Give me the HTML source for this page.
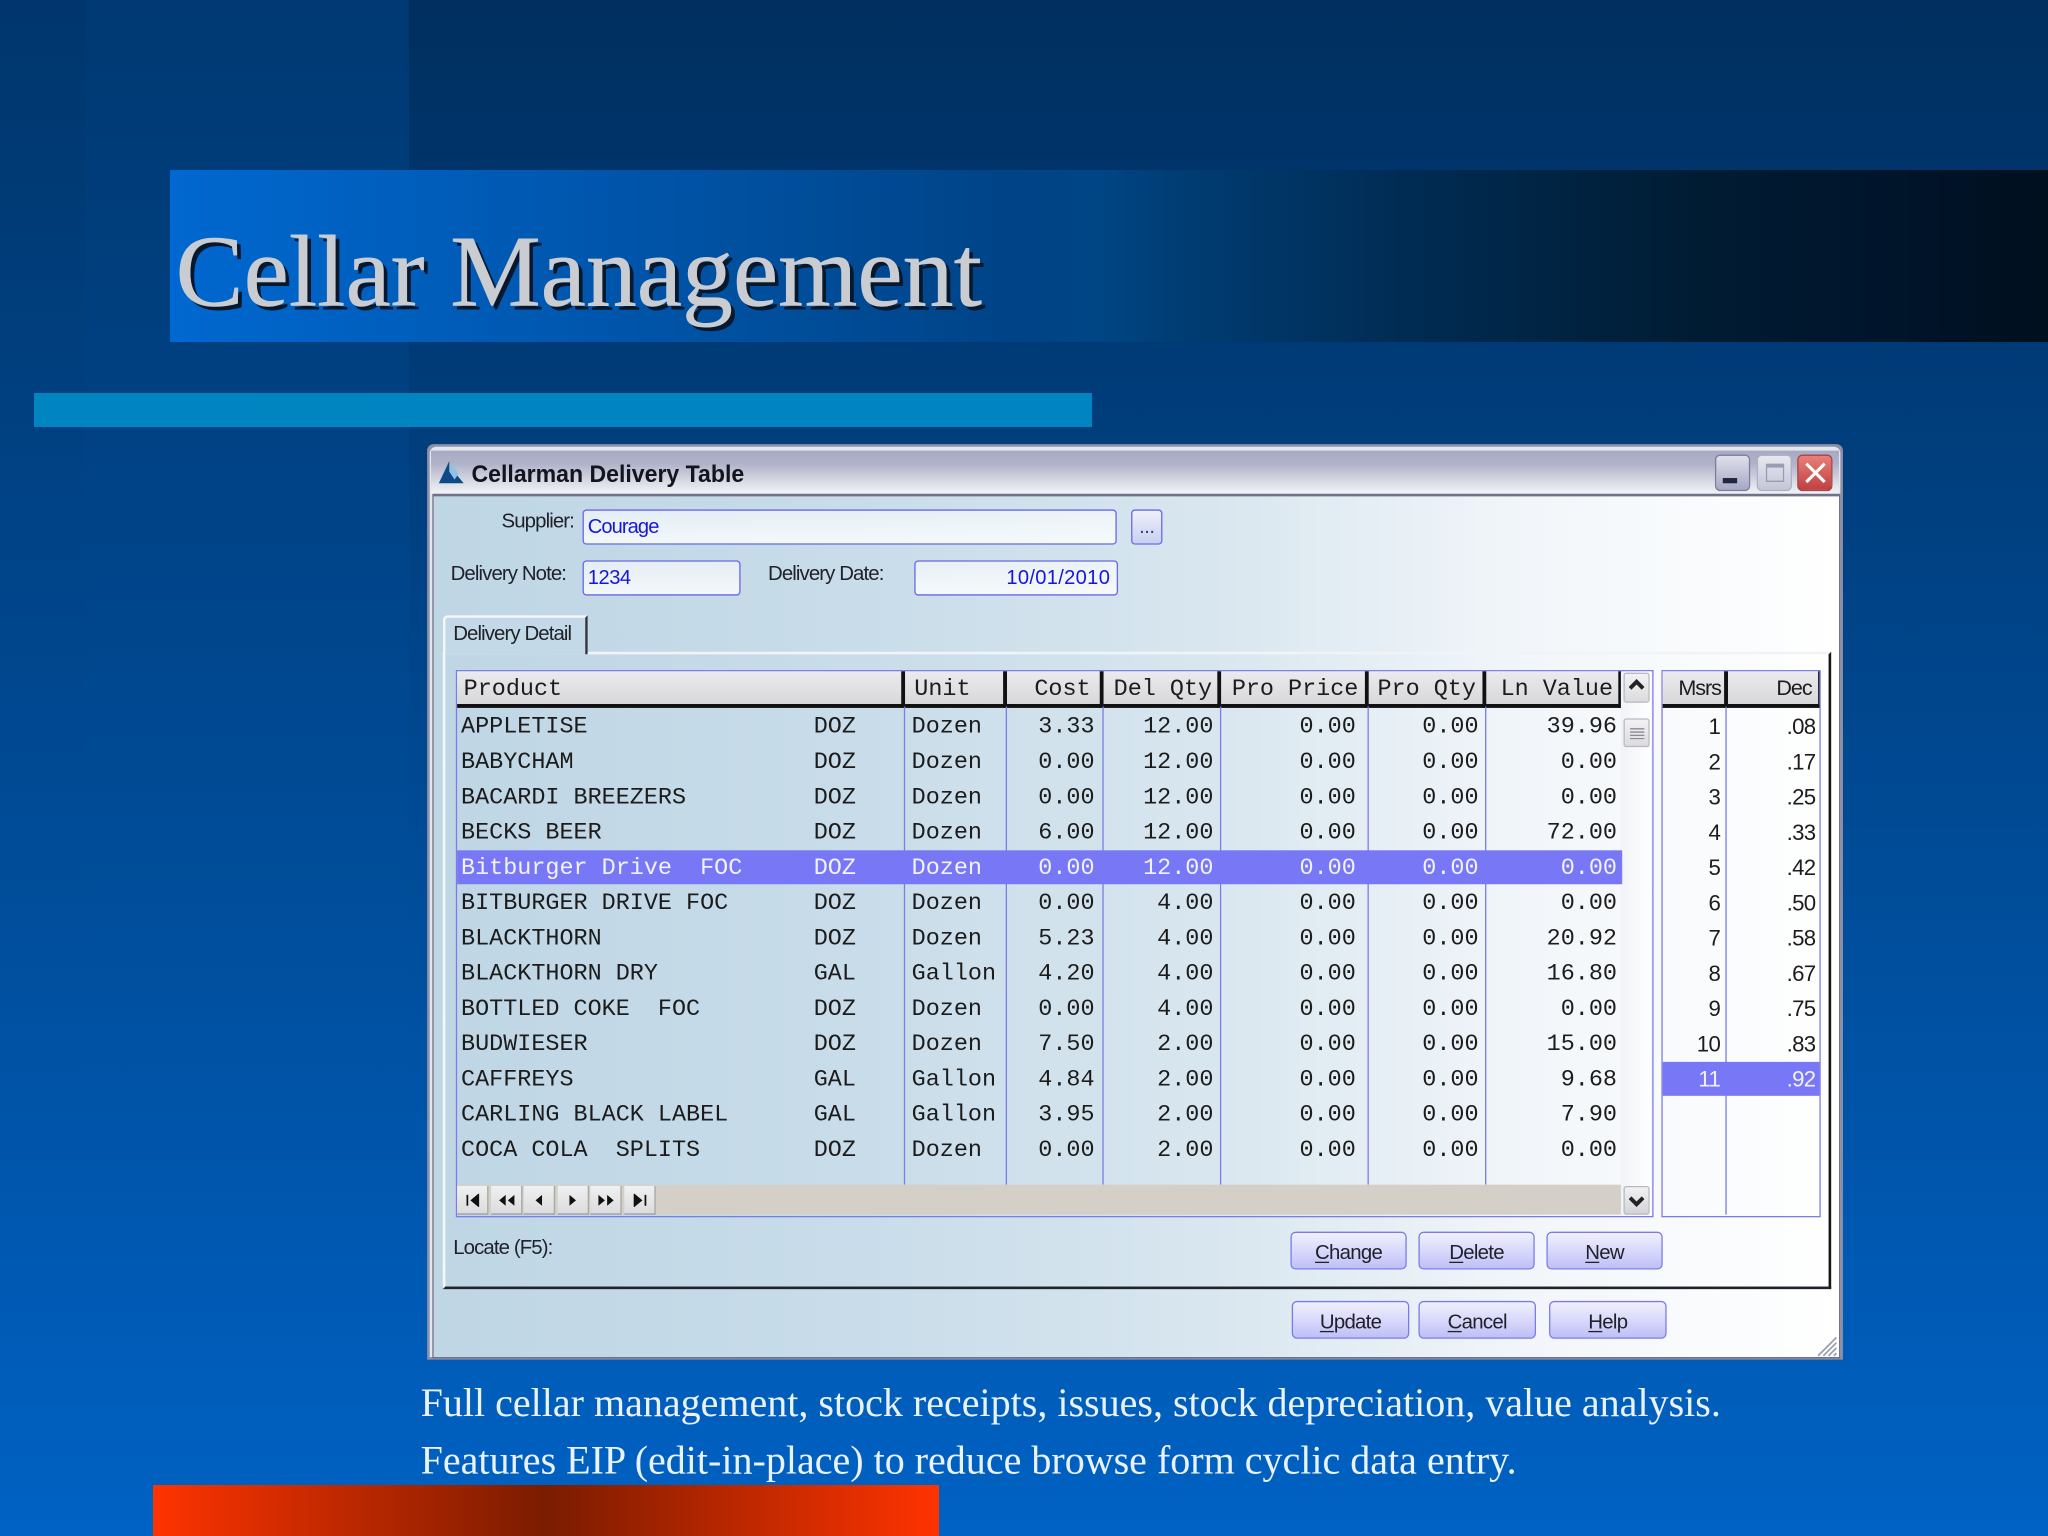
<!DOCTYPE html>
<html><head><meta charset="utf-8"><title>Cellar Management</title>
<style>
html,body{margin:0;padding:0;width:2048px;height:1536px;overflow:hidden;background:#00407f}
#bg{position:absolute;left:0;top:0;width:2048px;height:1536px;background:linear-gradient(180deg,#002f5f 0%,#0062c4 100%)}
#l1{position:absolute;left:85px;top:0;width:324px;height:1100px;background:linear-gradient(180deg,rgba(0,90,180,.24),rgba(0,90,180,.12) 50%,rgba(0,98,196,0))}
#l0{position:absolute;left:0;top:0;width:85px;height:1100px;background:linear-gradient(180deg,rgba(0,90,180,.16),rgba(0,90,180,.1) 50%,rgba(0,98,196,0))}
#tb{position:absolute;left:170px;top:170px;width:1878px;height:172px;background:linear-gradient(90deg,#0068d0 0,#0056ac 430px,#004488 830px,#004584 930px,#003c72 1020px,#002c54 1230px,#001c33 1530px,#00142a 1730px,#000f1e 1878px)}
#bar{position:absolute;left:34px;top:393px;width:1058px;height:34px;background:#0085c1}
#red{position:absolute;left:153px;top:1485px;width:786px;height:51px;background:linear-gradient(90deg,#ff3300 0,#7a1c00 50%,#ff3300 100%)}
#s{position:absolute;left:0;top:0;width:1568px;height:1176px;transform:scale(1.306122);transform-origin:0 0}
#s div,#s span,#s svg{position:absolute}
#h1{left:134.5px;top:163px;font:78px/90px "Liberation Serif",serif;color:#c9cdd2;text-shadow:3px 3px 0 #06182e;white-space:nowrap;-webkit-text-stroke:.35px #c9cdd2}
.p{left:322px;font:30.65px/40px "Liberation Serif",serif;color:#eaf2ff;white-space:nowrap}
#w{left:327px;top:340px;width:1084px;height:701px;background:#8e90a8;border-radius:5px 5px 0 0}
#w2{left:329px;top:342px;width:1080px;height:697px;background:#e4e6ee;border-radius:5px 5px 0 0}
#t{left:330px;top:345px;width:1078px;height:33px;background:linear-gradient(180deg,#a8aac4 0,#b0b2c8 30%,#e0e2ea 80%,#f2f3f7 100%)}
#tl{left:361px;top:351px;font:bold 18.6px/24px "Liberation Sans",sans-serif;color:#14141e;white-space:nowrap;transform:scaleX(.95);transform-origin:0 0}
#b{left:331px;top:378px;width:1076px;height:659px;background:linear-gradient(90deg,#bfd6e5 0,#c8dce9 30%,#d8e6ef 55%,#f2f6fa 78%,#fff 100%);border:1px solid #70728a;border-top:2px solid #70728a}
.wb{border-radius:4px;top:348px;width:27px;height:28px}
.lb{font:15.6px/20px "Liberation Sans",sans-serif;color:#20222a;white-space:nowrap;letter-spacing:-.68px}
.f{background:linear-gradient(180deg,rgba(255,255,255,.55),rgba(255,255,255,.8));border:1px solid #6a6ae6;border-radius:3px;box-sizing:border-box;color:#1616e0;font:15.4px/26px "Liberation Sans",sans-serif;letter-spacing:-.35px;white-space:nowrap}
#pl{left:339px;top:499px;width:1063px;height:488px;box-sizing:border-box;border-left:2px solid #f4f6f8;border-top:2px solid #f0f4f7;border-right:2px solid #16181c;border-bottom:2px solid #20242a}
#tab{left:339px;top:471px;width:111px;height:30px;box-sizing:border-box;border-left:2px solid #f4f6f8;border-top:2px solid #f4f6f8;border-right:2px solid #34363c;border-radius:4px 0 0 0;background:#c4d9e7}
#g{left:349px;top:513px;width:915px;height:417px;border:1px solid #7c7ce6}
#g2{left:1272px;top:513px;width:120px;height:417px;border:1px solid #7c7ce6}
.hc{top:514px;box-sizing:border-box;background:linear-gradient(180deg,#ebebed,#d8d8da);border-right:3px solid #111;border-bottom:3px solid #111;height:28px}
.ht{top:515px;font:17.95px/26px "Liberation Mono",monospace;color:#1c1c1c;white-space:pre}
.hs{top:515px;font:16.5px/24px "Liberation Sans",sans-serif;color:#1c1c1c;letter-spacing:-.8px;white-space:pre}
.vl{top:541px;width:1.4px;height:366px;background:#7c7ce6}
.r{left:0;width:1568px;height:27px;font:17.95px/29px "Liberation Mono",monospace;color:#1c1c1c;white-space:pre}
.r span{top:0}
.c1{left:353px}.c2{left:623px}.c3{left:698px}.c4{right:730px}.c5{right:639px}.c6{right:530px}.c7{right:436px}.c8{right:330px}
.m{right:251px;font:17px/27px "Liberation Sans",sans-serif;letter-spacing:-.5px}.d{right:178px;font:17px/27px "Liberation Sans",sans-serif;letter-spacing:-.5px}
.sel{color:#f2f2ff}
.btn{height:29px;width:89px;box-sizing:border-box;border:1px solid #7a7ae8;border-radius:4px;background:linear-gradient(180deg,#f0f0fe 0,#d4d4fb 60%,#bfbff6 100%);text-align:center;font:15.6px/31px "Liberation Sans",sans-serif;letter-spacing:-.55px;color:#20222a}
.btn u{text-underline-offset:2px}
.nb{top:908px;width:24px;height:22px;box-sizing:border-box;background:linear-gradient(180deg,#f0f0f0,#dcdcdc);border-right:1px solid #a8a8a8;border-bottom:1px solid #9a9ab0}
</style></head><body>
<div id="bg"></div><div id="l0"></div><div id="l1"></div><div id="tb"></div><div id="bar"></div><div id="red"></div>
<div id="s">
<div id="h1">Cellar Management</div>
<div class="p" style="top:1054px">Full cellar management, stock receipts, issues, stock depreciation, value analysis.</div>
<div class="p" style="top:1098px">Features EIP (edit-in-place) to reduce browse form cyclic data entry.</div>

<div id="w"></div><div id="w2"></div><div id="t"></div>
<svg style="left:335px;top:352px" width="22" height="20" viewBox="0 0 22 20"><path d="M9 1 L1 18 L20 18 L15 12 L13 15 L9 9 Z" fill="#0d4a86"/><path d="M11 3 L16 11 L13 15 L9 8 Z" fill="#8fc0e6"/></svg>
<div id="tl">Cellarman Delivery Table</div>
<div class="wb" style="left:1313px;background:linear-gradient(180deg,#e0e0ec,#a6a8c6);border:1px solid #7c7e9c;box-sizing:border-box"><div style="left:5px;top:17px;width:11px;height:4px;background:#23273a"></div></div>
<div class="wb" style="left:1345px;background:linear-gradient(180deg,#e8e8f0,#c4c6d8);border:1px solid #aeb0c4;box-sizing:border-box"><div style="left:6px;top:6px;width:14px;height:14px;border:1.5px solid #9a9cb4;border-top-width:3px;box-sizing:border-box"></div></div>
<div class="wb" style="left:1376px;background:linear-gradient(180deg,#e88078,#c04040);border:1px solid #a84048;box-sizing:border-box"><svg style="left:4px;top:4px" width="18" height="18" viewBox="0 0 18 18"><path d="M2 2 L16 16 M16 2 L2 16" stroke="#fff" stroke-width="2.4" fill="none"/></svg></div>

<div id="b"></div>

<div class="lb" style="left:384px;top:390px">Supplier:</div>
<div class="f" style="left:446px;top:390px;width:409px;height:27px;padding-left:3px;letter-spacing:-.7px">Courage</div>
<div class="f" style="left:866px;top:390px;width:24px;height:27px;text-align:center;color:#3a3a90;background:linear-gradient(180deg,#eef0fa,#c8d0ee)">...</div>
<div class="lb" style="left:345px;top:430px">Delivery Note:</div>
<div class="f" style="left:446px;top:429px;width:121px;height:27px;padding-left:3px">1234</div>
<div class="lb" style="left:588px;top:430px">Delivery Date:</div>
<div class="f" style="left:700px;top:429px;width:156px;height:27px;text-align:right;padding-right:5px;letter-spacing:.25px">10/01/2010</div>

<div id="pl"></div><div id="tab"></div>
<div class="lb" style="left:347px;top:476px">Delivery Detail</div>

<div id="g"></div><div id="g2"></div>
<div class="hc" style="left:350px;width:343px"></div>
<div class="hc" style="left:693px;width:78px"></div>
<div class="hc" style="left:771px;width:74px"></div>
<div class="hc" style="left:845px;width:90px"></div>
<div class="hc" style="left:935px;width:113px"></div>
<div class="hc" style="left:1048px;width:90px"></div>
<div class="hc" style="left:1138px;width:104px"></div>
<div class="hc" style="left:1273px;width:50px"></div>
<div class="hc" style="left:1323px;width:70px;border-right-width:1px"></div>
<span class="ht" style="left:355px">Product</span>
<span class="ht" style="left:700px">Unit</span>
<span class="ht" style="right:733px">Cost</span>
<span class="ht" style="right:640px">Del Qty</span>
<span class="ht" style="right:528px">Pro Price</span>
<span class="ht" style="right:438px">Pro Qty</span>
<span class="ht" style="right:333px">Ln Value</span>
<span class="hs" style="left:1285px">Msrs</span>
<span class="hs" style="right:181px">Dec</span>

<div class="vl" style="left:692px"></div><div class="vl" style="left:770px"></div><div class="vl" style="left:843.5px"></div><div class="vl" style="left:933.5px"></div><div class="vl" style="left:1047px"></div><div class="vl" style="left:1136.5px"></div>
<div class="vl" style="left:1321px;height:389px"></div>

<div style="left:1241px;top:514px;width:23px;height:416px;background:linear-gradient(90deg,#f0f3f7,#fff)"></div>
<div style="left:1243px;top:515px;width:20px;height:23px;box-sizing:border-box;border:1px solid #b8b8c4;border-radius:2px;background:linear-gradient(180deg,#f2f2f4,#dcdcde)"><svg style="left:3px;top:3px" width="12" height="10" viewBox="0 0 12 10"><path d="M1 8 L6 3 L11 8" stroke="#222" stroke-width="3" fill="none"/></svg></div>
<div style="left:1243px;top:550px;width:20px;height:22px;box-sizing:border-box;border:1px solid #b8b8c4;border-radius:2px;background:linear-gradient(180deg,#f2f2f4,#dcdcde)"><svg style="left:4px;top:6px" width="11" height="9" viewBox="0 0 11 9"><path d="M0 1H11M0 3.5H11M0 6H11M0 8.5H11" stroke="#8a8a94" stroke-width="1"/></svg></div>

<div style="left:350px;top:651px;width:892px;height:26px;background:#7878f6"></div>
<div style="left:1273px;top:813px;width:120px;height:26px;background:#7878f6"></div>

<div class="r" style="top:543px"><span class="c1">APPLETISE</span><span class="c2">DOZ</span><span class="c3">Dozen</span><span class="c4">3.33</span><span class="c5">12.00</span><span class="c6">0.00</span><span class="c7">0.00</span><span class="c8">39.96</span><span class="m">1</span><span class="d">.08</span></div>
<div class="r" style="top:570px"><span class="c1">BABYCHAM</span><span class="c2">DOZ</span><span class="c3">Dozen</span><span class="c4">0.00</span><span class="c5">12.00</span><span class="c6">0.00</span><span class="c7">0.00</span><span class="c8">0.00</span><span class="m">2</span><span class="d">.17</span></div>
<div class="r" style="top:597px"><span class="c1">BACARDI BREEZERS</span><span class="c2">DOZ</span><span class="c3">Dozen</span><span class="c4">0.00</span><span class="c5">12.00</span><span class="c6">0.00</span><span class="c7">0.00</span><span class="c8">0.00</span><span class="m">3</span><span class="d">.25</span></div>
<div class="r" style="top:624px"><span class="c1">BECKS BEER</span><span class="c2">DOZ</span><span class="c3">Dozen</span><span class="c4">6.00</span><span class="c5">12.00</span><span class="c6">0.00</span><span class="c7">0.00</span><span class="c8">72.00</span><span class="m">4</span><span class="d">.33</span></div>
<div class="r sel" style="top:651px"><span class="c1">Bitburger Drive  FOC</span><span class="c2">DOZ</span><span class="c3">Dozen</span><span class="c4">0.00</span><span class="c5">12.00</span><span class="c6">0.00</span><span class="c7">0.00</span><span class="c8">0.00</span><span class="m" style="color:#1c1c1c">5</span><span class="d" style="color:#1c1c1c">.42</span></div>
<div class="r" style="top:678px"><span class="c1">BITBURGER DRIVE FOC</span><span class="c2">DOZ</span><span class="c3">Dozen</span><span class="c4">0.00</span><span class="c5">4.00</span><span class="c6">0.00</span><span class="c7">0.00</span><span class="c8">0.00</span><span class="m">6</span><span class="d">.50</span></div>
<div class="r" style="top:705px"><span class="c1">BLACKTHORN</span><span class="c2">DOZ</span><span class="c3">Dozen</span><span class="c4">5.23</span><span class="c5">4.00</span><span class="c6">0.00</span><span class="c7">0.00</span><span class="c8">20.92</span><span class="m">7</span><span class="d">.58</span></div>
<div class="r" style="top:732px"><span class="c1">BLACKTHORN DRY</span><span class="c2">GAL</span><span class="c3">Gallon</span><span class="c4">4.20</span><span class="c5">4.00</span><span class="c6">0.00</span><span class="c7">0.00</span><span class="c8">16.80</span><span class="m">8</span><span class="d">.67</span></div>
<div class="r" style="top:759px"><span class="c1">BOTTLED COKE  FOC</span><span class="c2">DOZ</span><span class="c3">Dozen</span><span class="c4">0.00</span><span class="c5">4.00</span><span class="c6">0.00</span><span class="c7">0.00</span><span class="c8">0.00</span><span class="m">9</span><span class="d">.75</span></div>
<div class="r" style="top:786px"><span class="c1">BUDWIESER</span><span class="c2">DOZ</span><span class="c3">Dozen</span><span class="c4">7.50</span><span class="c5">2.00</span><span class="c6">0.00</span><span class="c7">0.00</span><span class="c8">15.00</span><span class="m">10</span><span class="d">.83</span></div>
<div class="r" style="top:813px"><span class="c1">CAFFREYS</span><span class="c2">GAL</span><span class="c3">Gallon</span><span class="c4">4.84</span><span class="c5">2.00</span><span class="c6">0.00</span><span class="c7">0.00</span><span class="c8">9.68</span><span class="m sel">11</span><span class="d sel">.92</span></div>
<div class="r" style="top:840px"><span class="c1">CARLING BLACK LABEL</span><span class="c2">GAL</span><span class="c3">Gallon</span><span class="c4">3.95</span><span class="c5">2.00</span><span class="c6">0.00</span><span class="c7">0.00</span><span class="c8">7.90</span></div>
<div class="r" style="top:867px"><span class="c1">COCA COLA  SPLITS</span><span class="c2">DOZ</span><span class="c3">Dozen</span><span class="c4">0.00</span><span class="c5">2.00</span><span class="c6">0.00</span><span class="c7">0.00</span><span class="c8">0.00</span></div>

<div style="left:350px;top:907px;width:891px;height:23px;background:#d4d0c8"></div>
<div class="nb" style="left:350px"><svg style="left:5px;top:6px" width="14" height="10" viewBox="0 0 14 12"><path d="M2 1V11M12 1L6 6L12 11Z" stroke="#111" stroke-width="1.6" fill="#111"/></svg></div>
<div class="nb" style="left:375.5px"><svg style="left:5px;top:6px" width="14" height="10" viewBox="0 0 16 12"><path d="M7 1L1 6L7 11ZM15 1L9 6L15 11Z" fill="#111"/></svg></div>
<div class="nb" style="left:401px"><svg style="left:7px;top:6px" width="9" height="10" viewBox="0 0 10 12"><path d="M8 1L2 6L8 11Z" fill="#111"/></svg></div>
<div class="nb" style="left:426.5px"><svg style="left:7px;top:6px" width="9" height="10" viewBox="0 0 10 12"><path d="M2 1L8 6L2 11Z" fill="#111"/></svg></div>
<div class="nb" style="left:452px"><svg style="left:5px;top:6px" width="14" height="10" viewBox="0 0 16 12"><path d="M1 1L7 6L1 11ZM9 1L15 6L9 11Z" fill="#111"/></svg></div>
<div class="nb" style="left:477.5px"><svg style="left:5px;top:6px" width="14" height="10" viewBox="0 0 14 12"><path d="M2 1L8 6L2 11ZM12 1V11" stroke="#111" stroke-width="1.6" fill="#111"/></svg></div>
<div style="left:1243px;top:908px;width:20px;height:22px;box-sizing:border-box;border:1px solid #b8b8c4;border-radius:2px;background:linear-gradient(180deg,#f2f2f4,#d4d4d8)"><svg style="left:3px;top:6px" width="12" height="10" viewBox="0 0 12 10"><path d="M1 2 L6 7 L11 2" stroke="#222" stroke-width="3" fill="none"/></svg></div>

<div class="lb" style="left:347px;top:946px">Locate (F5):</div>
<div class="btn" style="left:988px;top:943px"><u>C</u>hange</div>
<div class="btn" style="left:1086px;top:943px"><u>D</u>elete</div>
<div class="btn" style="left:1184px;top:943px"><u>N</u>ew</div>
<div class="btn" style="left:989px;top:996px;width:90px"><u>U</u>pdate</div>
<div class="btn" style="left:1086px;top:996px;width:90px"><u>C</u>ancel</div>
<div class="btn" style="left:1186px;top:996px;width:90px"><u>H</u>elp</div>
<svg style="left:1391px;top:1023px" width="16" height="16" viewBox="0 0 16 16"><path d="M15 1L1 15M15 5L5 15M15 9L9 15M15 13L13 15" stroke="#9a9cb0" stroke-width="1.3" fill="none"/></svg>
</div>
</body></html>
